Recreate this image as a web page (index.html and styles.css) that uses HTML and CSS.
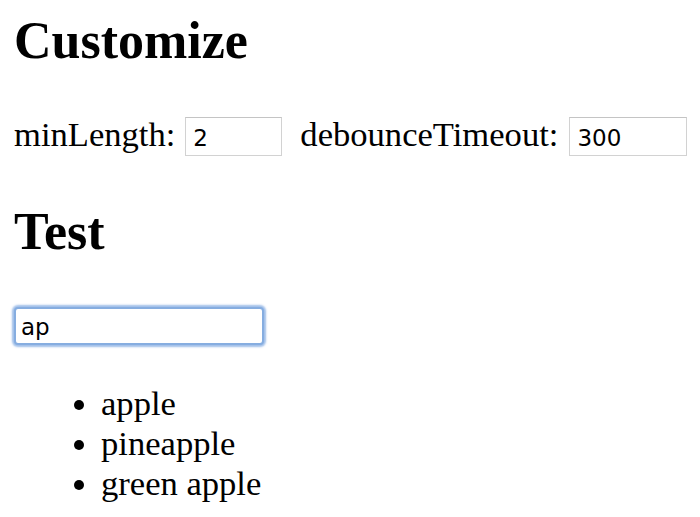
FILE: index.html
```html
<!DOCTYPE html>
<html>
<head>
<meta charset="utf-8">
<title>Customize</title>
<link rel="stylesheet" href="styles.css">
</head>
<body>
<h2 class="title title-first">Customize</h2>
<div class="row">
  <label class="label">minLength:</label>
  <input class="num num-min" type="text" value="2">
  <label class="label label-gap">debounceTimeout:</label>
  <input class="num num-debounce" type="text" value="300">
</div>
<h2 class="title title-test">Test</h2>
<input class="search" type="text" value="ap">
<ul class="results">
  <li>apple</li>
  <li>pineapple</li>
  <li>green apple</li>
</ul>
</body>
</html>
```
FILE: styles.css
```css
html, body {
  background: #ffffff;
}
body {
  margin: 0;
  padding: 0 0 0 14px;
  font-family: "Liberation Serif", "Times New Roman", serif;
  color: #000;
}
.title {
  font-size: 52px;
  line-height: 60px;
  font-weight: bold;
  margin: 0;
}
.title-first {
  margin-top: 11px;
}
.row {
  display: flex;
  align-items: baseline;
  margin-top: 46px;
}
.label {
  font-size: 34.6px;
  line-height: 32px;
}
.label-gap {
  margin-left: 18px;
}
.num {
  box-sizing: border-box;
  height: 39px;
  padding: 3px 7px 0 7px;
  border: 1px solid #d2d2d2;
  border-top-color: #c4c4c4;
  font-family: "DejaVu Sans", Verdana, sans-serif;
  font-size: 23px;
  color: #000;
  background: #fff;
  outline: none;
}
.num-min {
  width: 97px;
  margin: 0 0 0 10px;
}
.num-debounce {
  width: 118px;
  margin: 0 0 0 11px;
}
.title-test {
  margin-top: 46px;
}
.search {
  display: block;
  box-sizing: border-box;
  width: 250px;
  height: 38px;
  margin: 45px 0 0 0;
  padding: 2px 5px 0 5px;
  border: 2px solid #86ade0;
  border-radius: 4px;
  box-shadow: 0 0 2px 2px rgba(128, 170, 225, 0.75);
  font-family: "DejaVu Sans", Verdana, sans-serif;
  font-size: 23px;
  color: #000;
  background: #fff;
  outline: none;
}
.results {
  margin: 38px 0 0 0;
  padding: 0 0 0 87px;
  font-size: 34.6px;
  line-height: 40px;
}
```
